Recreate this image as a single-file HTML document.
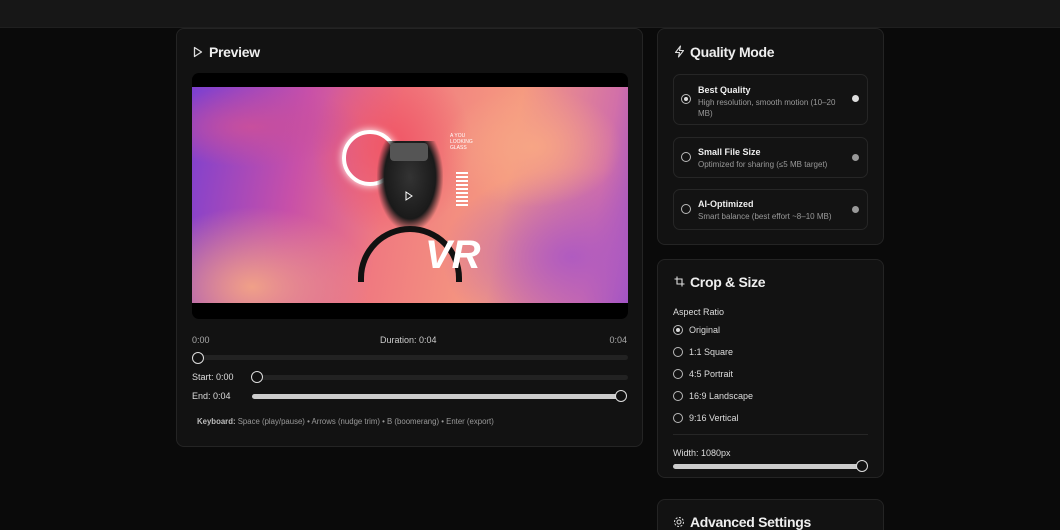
<!DOCTYPE html>
<html><head><style>
*{margin:0;padding:0;box-sizing:border-box}
html,body{width:1060px;height:530px;overflow:hidden}
body{background:#0a0a0a;font-family:"Liberation Sans",sans-serif;color:#e8e8e8;position:relative}
.top{position:absolute;left:0;top:0;width:1060px;height:28px;background:#171717;border-bottom:1px solid #1f1f1f}
.panel{position:absolute;background:#121212;border:1px solid #242424;border-radius:8px}
h2{position:absolute;font-size:14px;font-weight:bold;color:#eee;letter-spacing:-0.3px}
.abs{position:absolute}
.small{font-size:9px;color:#aaa}
.opt{position:absolute;left:15px;width:195px;border:1px solid #262626;border-radius:7px;background:#131313}
.radio{position:absolute;width:10px;height:10px;border:1px solid #bbb;border-radius:50%}
.radio.on::after{content:"";position:absolute;left:2px;top:2px;width:4px;height:4px;border-radius:50%;background:#ddd}
.dot{position:absolute;width:7px;height:7px;border-radius:50%;background:#999;right:8px}
.track{position:absolute;height:5px;border-radius:3px;background:#222}
.knob{position:absolute;width:12px;height:12px;border-radius:50%;border:1.5px solid #ddd;background:#111}
.lbl{position:absolute;font-size:9px;color:#ddd}
</style></head><body>
<div class="top"></div>

<div class="panel" style="left:176px;top:28px;width:467px;height:419px">
  <svg class="abs" style="left:16px;top:17px" width="10" height="12" viewBox="0 0 10 12"><path d="M1.5 1.5 L8.5 6 L1.5 10.5 Z" fill="none" stroke="#ddd" stroke-width="1.3" stroke-linejoin="round"/></svg>
  <h2 style="left:32px;top:15px">Preview</h2>
  <div class="abs" style="left:15px;top:44px;width:436px;height:246px;background:#000;border-radius:7px;overflow:hidden">
    <div class="abs" style="left:0;top:14px;width:436px;height:216px;background:
      radial-gradient(ellipse 90px 60px at 340px 60px,#f7a585 0%,transparent 100%),
      radial-gradient(ellipse 120px 80px at 60px 200px,#f0a088 0%,transparent 100%),
      radial-gradient(ellipse 110px 40px at 60px 40px,#c84f9d 0%,transparent 100%),
      radial-gradient(ellipse 130px 90px at 380px 170px,#b05bc0 0%,transparent 100%),
      radial-gradient(ellipse 80px 90px at 200px 60px,#f05565 0%,transparent 100%),
      linear-gradient(100deg,#7c40d0 0%,#c850a8 25%,#f07a80 45%,#f59a80 70%,#d270a8 90%,#9a50c8 100%)"></div>
    <div class="abs" style="left:150px;top:57px;width:56px;height:56px;border-radius:50%;border:4px solid #fff;box-shadow:0 0 8px #fff"></div>
    <div class="abs" style="left:185px;top:68px;width:66px;height:90px;background:radial-gradient(ellipse at 50% 40%,#333 0%,#1a1a1a 55%,transparent 72%)"></div>
    <div class="abs" style="left:198px;top:70px;width:38px;height:18px;background:#555;border-radius:4px"></div>
    <div class="abs" style="left:166px;top:153px;width:104px;height:56px;border-radius:52px 52px 0 0;border:6px solid #111;border-bottom:none"></div>
    <div class="abs" style="left:233px;top:160px;font-size:40px;font-weight:bold;color:#fff;font-style:italic">VR</div>
    <div class="abs" style="left:264px;top:99px;width:12px;height:35px;background:repeating-linear-gradient(#fff 0 2px,transparent 2px 4px)"></div>
    <div class="abs" style="left:258px;top:60px;font-size:5px;color:#fff;line-height:6px">A YOU<br>LOOKING<br>GLASS</div>
    <svg class="abs" style="left:212px;top:118px" width="10" height="10"><path d="M2 1 L8 5 L2 9Z" fill="none" stroke="#fff" stroke-width="1"/></svg>
  </div>
  <div class="abs small" style="left:15px;top:306px">0:00</div>
  <div class="abs small" style="left:203px;top:306px;color:#ccc">Duration: 0:04</div>
  <div class="abs small" style="right:15px;top:306px">0:04</div>
  <div class="track" style="left:15px;top:326px;width:436px"></div>
  <div class="knob" style="left:15px;top:323px"></div>
  <div class="lbl" style="left:15px;top:343px">Start: 0:00</div>
  <div class="track" style="left:75px;top:346px;width:376px"></div>
  <div class="knob" style="left:74px;top:342px"></div>
  <div class="lbl" style="left:15px;top:362px">End: 0:04</div>
  <div class="track" style="left:75px;top:365px;width:374px;background:#ccc"></div>
  <div class="knob" style="left:438px;top:361px"></div>
  <div class="abs" style="left:20px;top:388px;font-size:7.8px;color:#999"><b style="color:#bbb">Keyboard:</b> Space (play/pause) • Arrows (nudge trim) • B (boomerang) • Enter (export)</div>
</div>

<div class="panel" style="left:657px;top:28px;width:227px;height:217px">
  <svg class="abs" style="left:16px;top:16px" width="11" height="13" viewBox="0 0 11 13"><path d="M6.5 1 L1.5 7.5 H5.5 L4.5 12 L9.5 5.5 H5.5 Z" fill="none" stroke="#ddd" stroke-width="1.1" stroke-linejoin="round"/></svg>
  <h2 style="left:32px;top:15px">Quality Mode</h2>
  <div class="opt" style="top:45px;height:51px">
    <div class="radio on" style="left:7px;top:19px"></div>
    <div class="abs" style="left:24px;top:10px;font-size:9px;font-weight:bold;color:#eee">Best Quality</div>
    <div class="abs" style="left:24px;top:22px;font-size:8px;color:#999;line-height:11px;width:140px">High resolution, smooth motion (10–20 MB)</div>
    <div class="dot" style="top:20px;background:#ddd"></div>
  </div>
  <div class="opt" style="top:108px;height:41px">
    <div class="radio" style="left:7px;top:14px"></div>
    <div class="abs" style="left:24px;top:9px;font-size:9px;font-weight:bold;color:#eee">Small File Size</div>
    <div class="abs" style="left:24px;top:22px;font-size:8px;color:#999">Optimized for sharing (≤5 MB target)</div>
    <div class="dot" style="top:16px"></div>
  </div>
  <div class="opt" style="top:160px;height:41px">
    <div class="radio" style="left:7px;top:14px"></div>
    <div class="abs" style="left:24px;top:9px;font-size:9px;font-weight:bold;color:#eee">AI-Optimized</div>
    <div class="abs" style="left:24px;top:22px;font-size:8px;color:#999">Smart balance (best effort ~8–10 MB)</div>
    <div class="dot" style="top:16px"></div>
  </div>
</div>

<div class="panel" style="left:657px;top:259px;width:227px;height:219px">
  <svg class="abs" style="left:16px;top:16px" width="11" height="11" viewBox="0 0 11 11"><path d="M3 0.5 V8 H10.5 M0.5 3 H8 V10.5" fill="none" stroke="#ddd" stroke-width="1.1"/></svg>
  <h2 style="left:32px;top:14px">Crop &amp; Size</h2>
  <div class="lbl" style="left:15px;top:47px">Aspect Ratio</div>
  <div class="radio on" style="left:15px;top:65px"></div><div class="lbl" style="left:31px;top:65px">Original</div>
  <div class="radio" style="left:15px;top:87px"></div><div class="lbl" style="left:31px;top:87px">1:1 Square</div>
  <div class="radio" style="left:15px;top:109px"></div><div class="lbl" style="left:31px;top:109px">4:5 Portrait</div>
  <div class="radio" style="left:15px;top:131px"></div><div class="lbl" style="left:31px;top:131px">16:9 Landscape</div>
  <div class="radio" style="left:15px;top:153px"></div><div class="lbl" style="left:31px;top:153px">9:16 Vertical</div>
  <div class="abs" style="left:15px;top:174px;width:195px;height:1px;background:#262626"></div>
  <div class="lbl" style="left:15px;top:188px">Width: 1080px</div>
  <div class="track" style="left:15px;top:204px;width:190px;background:#ccc"></div>
  <div class="knob" style="left:198px;top:200px"></div>
</div>

<div class="panel" style="left:657px;top:499px;width:227px;height:31px;border-bottom:none;border-radius:8px 8px 0 0;overflow:hidden">
  <svg class="abs" style="left:15px;top:16px" width="12" height="12" viewBox="0 0 12 12"><circle cx="6" cy="6" r="2" fill="none" stroke="#ddd" stroke-width="1"/><circle cx="6" cy="6" r="4.5" fill="none" stroke="#ddd" stroke-width="1" stroke-dasharray="2 1.5"/></svg>
  <h2 style="left:32px;top:14px">Advanced Settings</h2>
</div>
</body></html>
